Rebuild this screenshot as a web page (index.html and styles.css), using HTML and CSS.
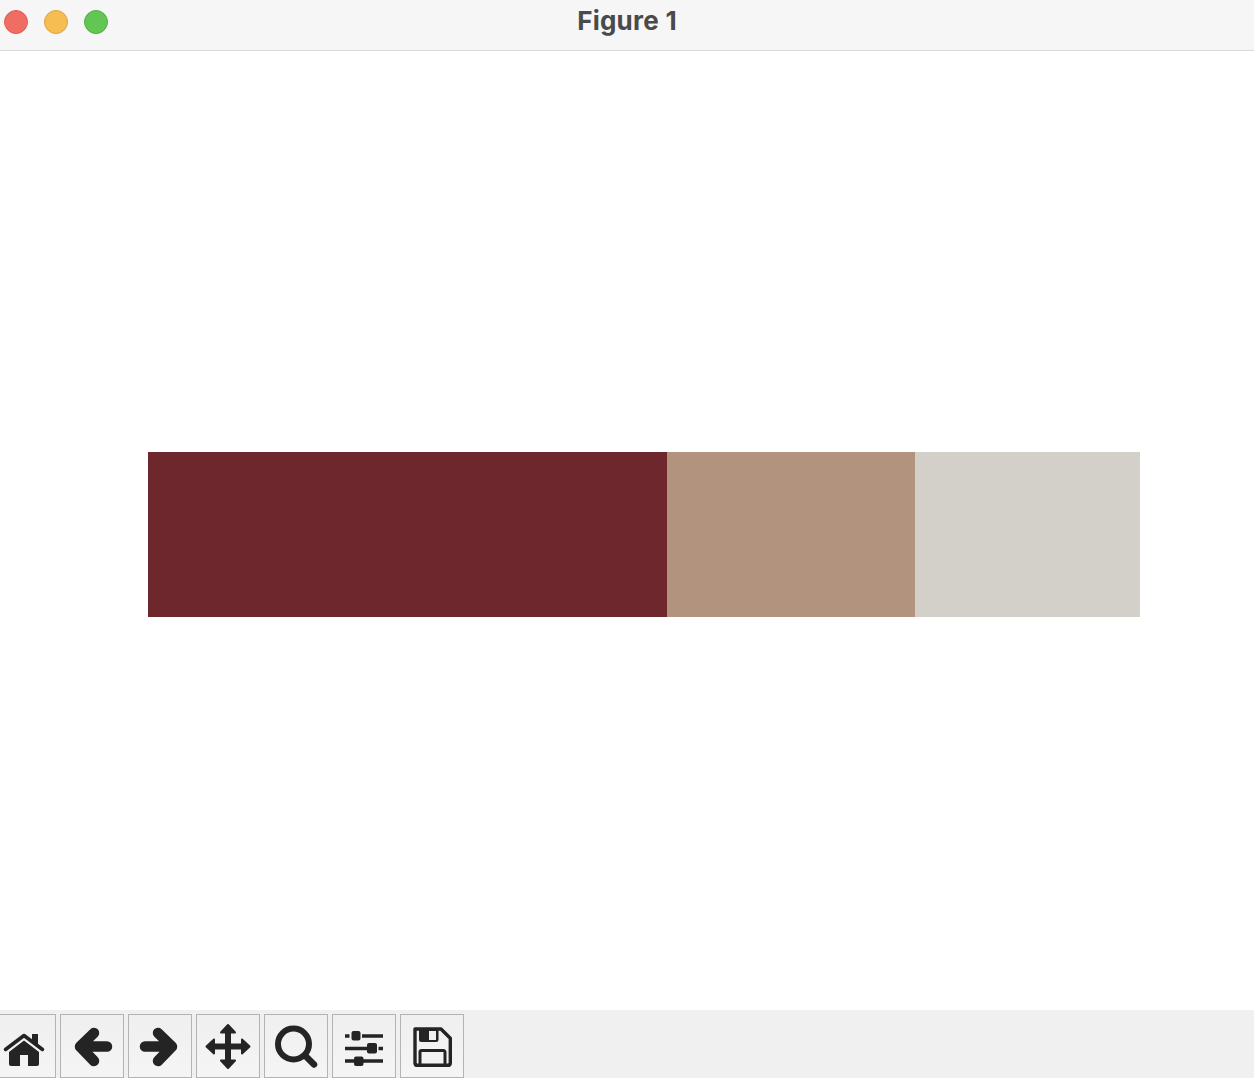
FILE: index.html
```
<!DOCTYPE html>
<html lang="en">
<head>
<meta charset="utf-8">
<title>Figure 1</title>
<link rel="stylesheet" href="styles.css">
</head>
<body>
<div class="window">
  <header class="titlebar">
    <div class="lights">
      <span class="light red"></span>
      <span class="light yellow"></span>
      <span class="light green"></span>
    </div>
    <h1 class="title">Figure 1</h1>
  </header>
  <main class="canvas">
    <div class="bar">
      <div class="seg seg-a"></div>
      <div class="seg seg-b"></div>
      <div class="seg seg-c"></div>
    </div>
  </main>
  <nav class="toolbar">
    <button class="tool tool-first" aria-label="Home">
      <svg class="icon" viewBox="-8 1014 64 64">
        <path class="ln" d="M5.5 1049.5 24 1035.5 42.5 1049.5" stroke-width="3.6"/>
        <path class="fill" d="M32 1034h6v11l-6-4.6zM24 1040.5 39 1052v12a2 2 0 0 1-2 2H28v-11h-8v11H11a2 2 0 0 1-2-2v-12z"/>
      </svg>
    </button>
    <button class="tool" aria-label="Back">
      <svg class="icon" viewBox="60 1014 64 64">
        <path class="ln" d="M107 1046.5H82M94 1033 80 1046.5 94 1061" stroke-width="10.5"/>
      </svg>
    </button>
    <button class="tool" aria-label="Forward">
      <svg class="icon" viewBox="128 1014 64 64">
        <path class="ln" d="M145 1046.5H170M158 1033 172 1046.5 158 1061" stroke-width="10.5"/>
      </svg>
    </button>
    <button class="tool" aria-label="Pan">
      <svg class="icon" viewBox="196 1014 64 64">
        <path class="ln" d="M228 1030V1062M212 1046.5H244" stroke-width="6"/>
        <path class="fill solid" d="M228 1025 235 1032.5H221zM228 1068 235 1060.500H221zM206.500 1046.500 214 1039.500V1053.500zM249.500 1046.500 242 1039.500V1053.500z"/>
      </svg>
    </button>
    <button class="tool" aria-label="Zoom">
      <svg class="icon" viewBox="264 1014 64 64">
        <circle class="ln" cx="293.500" cy="1044" r="15.500" stroke-width="6"/>
        <path class="ln" d="M305 1055.500 314 1064.500" stroke-width="6.500"/>
      </svg>
    </button>
    <button class="tool" aria-label="Configure subplots">
      <svg class="icon" viewBox="332 1014 64 64">
        <path class="ln flat" d="M345 1036h4.500M362 1036h21M345 1048.500h22M378.500 1048.500h4.500M345 1061h9M363 1061h20" stroke-width="3.400"/>
        <rect class="fill" x="351.500" y="1031" width="9" height="9.500" rx="2"/>
        <rect class="fill" x="367" y="1043" width="10" height="10.500" rx="2"/>
        <rect class="fill" x="354" y="1056.500" width="9.500" height="9.500" rx="2"/>
      </svg>
    </button>
    <button class="tool" aria-label="Save">
      <svg class="icon" viewBox="400 1014 64 64">
        <path class="ln" d="M415 1029H441L450.300 1038.300V1063A2.500 2.500 0 0 1 447.800 1065.300H417.500A2.500 2.500 0 0 1 415 1063z" stroke-width="3.400"/>
        <path class="fill" d="M419 1028h19.500v11.500a2.500 2.500 0 0 1-2.500 2.500h-14.500a2.500 2.500 0 0 1-2.500-2.500zM429 1031v9h7v-9z" fill-rule="evenodd"/>
        <path class="ln" d="M420 1065V1052A1.500 1.500 0 0 1 421.500 1050.500H443.500A1.500 1.500 0 0 1 445 1052V1065" stroke-width="3"/>
      </svg>
    </button>
  </nav>
</div>
</body>
</html>
```
FILE: styles.css
```
* {
  box-sizing: border-box;
}

html,
body {
  margin: 0;
  height: 100%;
  overflow: hidden;
  background: #fff;
}

.window {
  display: flex;
  flex-direction: column;
  height: 1078px;
  font-family: Inter, "Liberation Sans", sans-serif;
}

.titlebar {
  position: relative;
  flex: 0 0 51px;
  display: flex;
  align-items: center;
  justify-content: center;
  background: #f6f6f6;
  border-bottom: 1px solid #d9d9d9;
  padding-bottom: 8px;
}

.lights {
  position: absolute;
  left: 4px;
  top: 10px;
  display: flex;
  gap: 16px;
}

.light {
  width: 24px;
  height: 24px;
  border-radius: 50%;
  border: 1px solid;
}

.red {
  background: #f16c62;
  border-color: #dc5f55;
}

.yellow {
  background: #f6be52;
  border-color: #dca341;
}

.green {
  background: #62c655;
  border-color: #52ad47;
}

.title {
  margin: 0;
  font-size: 26px;
  font-weight: 700;
  line-height: 30px;
  letter-spacing: 0.25px;
  color: #4a4a4a;
}

.canvas {
  flex: 1;
  background: #fff;
  padding: 401px 0 0 148px;
}

.bar {
  display: flex;
  height: 165px;
}

.seg-a {
  width: 519px;
  background: #6e272d;
}

.seg-b {
  width: 248px;
  background: #b2937d;
}

.seg-c {
  width: 225px;
  background: #d3d0ca;
}

.toolbar {
  flex: 0 0 68px;
  display: flex;
  gap: 4px;
  padding-top: 4px;
  background: #f0f0f0;
}

.tool {
  flex: 0 0 64px;
  height: 64px;
  padding: 0;
  border: 1px solid #b4b4b4;
  background: linear-gradient(#efefef, #f5f5f5);
}

.tool-first {
  margin-left: -8px;
}

.icon {
  display: block;
  width: 64px;
  height: 64px;
  margin: -1px;
}

.ln {
  fill: none;
  stroke: #242424;
  stroke-linecap: round;
  stroke-linejoin: round;
}

.flat {
  stroke-linecap: butt;
}

.fill {
  fill: #242424;
}

.solid {
  stroke: #242424;
  stroke-width: 2;
  stroke-linejoin: round;
}
```
